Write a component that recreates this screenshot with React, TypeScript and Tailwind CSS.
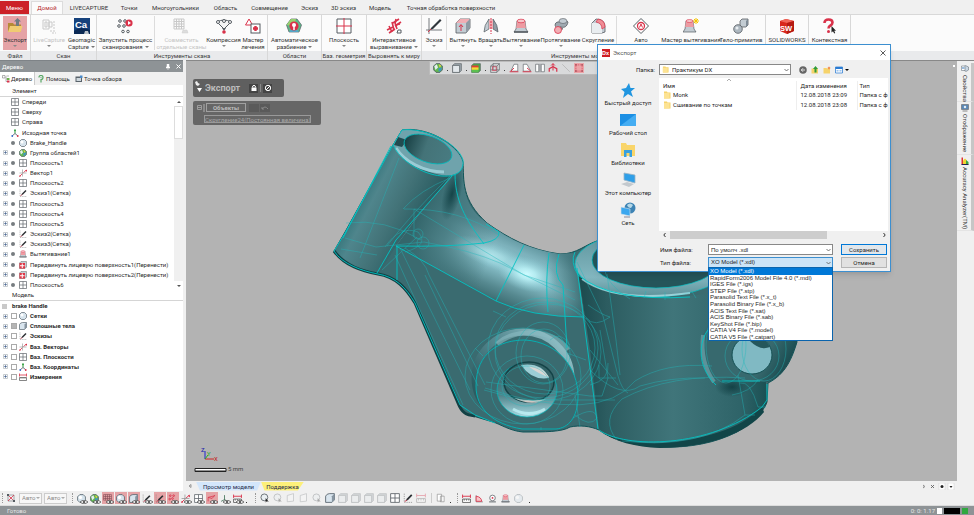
import React from 'react';

const RED = '#d9324a';
const INK = '#555b61';
const STEEL = '#c3ccd3';

// All glyphs are drawn on a 16x16 grid
const glyphs: Record<string, React.ReactNode> = {
  exportFolder: (
    <>
      <path d="M1 14V5h5l1 1.500h7V14z" fill="#b58a35" />
      <path d="M1 14l2-6h12.500l-1.800 6z" fill="#f0cb72" />
      <path d="M9 8V3.500H7L10.500 0 14 3.500h-2V8z" fill="#6f7b84" />
    </>
  ),
  liveCapture: (
    <g fill="none" stroke="#c9c9c9">
      <path d="M2 2h6v9H2zM4 4h2v5H4zM8 4h3v5H8z" />
      <path d="M13 3v9M9 13h6M11 15h4" strokeDasharray="2 1" />
    </g>
  ),
  geomagic: (
    <>
      <rect width="16" height="16" fill="#16427c" />
      <path d="M0 13Q6 8 16 12v4H0z" fill="#0b2a55" />
      <text x="1" y="9.500" fontSize="9.500" fontWeight="bold" fill="#fff" fontFamily="Liberation Sans, sans-serif">Ca</text>
      <path d="M10 16l1-3h3l1 3z" fill="#b9c1c9" />
    </>
  ),
  scanProcess: (
    <>
      <g fill="none" stroke={INK}>
        <circle cx="3" cy="3" r="1.300" />
        <circle cx="8" cy="3" r="1.300" />
        <circle cx="2" cy="8" r="1.300" />
        <circle cx="7" cy="8" r="1.300" />
        <circle cx="6" cy="13.500" r="1.300" />
        <circle cx="11" cy="13.500" r="1.300" />
      </g>
      <circle cx="12" cy="5" r="3.600" fill={RED} />
      <path d="M11 3l3 2-3 2z" fill="#fff" />
    </>
  ),
  alignScans: (
    <>
      <path d="M1 1h10v10H1zM3.500 1v10M6 1v10M8.500 1v10M1 3.500h10M1 6h10M1 8.500h10" fill="none" stroke="#c9c9c9" />
      <path d="M9 15l1-3h4l1 3z" fill="#ddd" stroke="#ccc" strokeWidth=".5" />
    </>
  ),
  compress: (
    <>
      <path d="M1 4q7-4 14 0L8 11z" fill="#f4f4f4" stroke={INK} />
      <circle cx="2" cy="4" r="1.500" fill="#fff" stroke={INK} />
      <circle cx="14" cy="4" r="1.500" fill="#fff" stroke={INK} />
      <circle cx="8" cy="3" r="1.500" fill="#fff" stroke={INK} />
      <path d="M6 10h4L8 13z" fill={INK} />
      <circle cx="8" cy="14" r="1.800" fill={RED} />
    </>
  ),
  heal: (
    <>
      <path d="M4 1l3.500 6h-7z" fill="#fff" stroke={RED} />
      <rect x="6" y="6" width="9" height="9" fill="#fff" stroke={INK} />
      <path d="M10.500 8v5M8 10.500h5" stroke={RED} strokeWidth="2.400" />
    </>
  ),
  autoSplit: (
    <>
      <path d="M5 1h6l4.500 6L13 14H3L.5 7z" fill="#5eb98a" stroke={INK} strokeWidth=".7" />
      <path d="M.5 7L5 1h5L8 8z" fill="#98d36f" />
      <path d="M3 14l5-6 5 6z" fill="#55a7c9" />
      <circle cx="8" cy="8" r="4.600" fill={RED} />
      <circle cx="8" cy="7" r="2" fill="#fff" />
      <path d="M8 8v4" stroke="#fff" strokeWidth="1.500" />
    </>
  ),
  plane: (
    <>
      <path d="M1 1h14v14H1z" fill="#fff" stroke={INK} />
      <path d="M8 0v16M0 8h16" stroke={RED} />
    </>
  ),
  align: (
    <g stroke={RED} fill="none" strokeWidth="1.600">
      <path d="M1 12l6-3M3 15l6-4M7 5l6-4M9 8l6-4" />
      <path d="M10 1l-1 5M14 6l-5 1M3 8l3 6M6 4l2 8M9 5l2 6" />
      <path d="M11 15l1-3h3v3z" stroke={INK} strokeWidth="1" />
    </g>
  ),
  sketch: (
    <>
      <path d="M3 0v16M0 12h16" stroke={INK} strokeWidth=".8" />
      <path d="M5 10L14 1l1.500 1.500L7 11l-3 1z" fill="#30363c" />
      <path d="M2 14l3-3" stroke={RED} />
    </>
  ),
  extrude: (
    <>
      <path d="M1 5l4-4h10v9l-4 5H1z" fill={STEEL} stroke={INK} strokeWidth=".8" />
      <path d="M1 5l4-4h10l-4 4z" fill="#f1aeb4" />
      <path d="M11 5l4-4v9l-4 5z" fill="#8f9aa3" />
      <path d="M6 13V7M4 9l2-2.500L8 9" stroke={RED} fill="none" />
    </>
  ),
  revolve: (
    <>
      <path d="M6 1Q1 7 1 14l5-3z" fill={STEEL} stroke={INK} strokeWidth=".7" />
      <path d="M10 1q5 6 5 13l-5-3z" fill="#929ca5" stroke={INK} strokeWidth=".7" />
      <path d="M6 2h4v9H6z" fill="#f1aeb4" />
      <path d="M8 0v16" stroke={RED} strokeDasharray="2 1" />
    </>
  ),
  loft: (
    <>
      <path d="M4 3h8l1 8 2 3H1l2-3z" fill={STEEL} stroke={INK} strokeWidth=".7" />
      <path d="M4 3h8l.8 7H3.200z" fill="#ee9ba2" />
      <ellipse cx="8" cy="3" rx="4" ry="1.800" fill="#f7c6ca" stroke={RED} strokeWidth=".7" />
      <path d="M1 14h14" stroke={INK} strokeWidth="1.500" />
    </>
  ),
  sweep: (
    <>
      <path d="M5 11C0 8 2 3 7 4c2 .5 3-1 4-3l4 3c-1 5-4 6-7 5-2-1 0 1 2 2z" fill="#9fa9b1" stroke={INK} strokeWidth=".8" />
      <ellipse cx="10" cy="3" rx="4" ry="2.500" fill={STEEL} stroke={INK} strokeWidth=".6" />
      <circle cx="5" cy="12" r="3.500" fill="#f1aeb4" stroke={RED} strokeWidth=".8" />
    </>
  ),
  fillet: (
    <>
      <path d="M2 5l4-4q9 0 9 8v5l-3 1H2z" fill={STEEL} stroke={INK} strokeWidth=".8" />
      <path d="M2 5h4q6 0 6 6v4H2z" fill="#e9edf0" />
      <path d="M6 4l2-3q7 1 7 8l-3 2q0-6-6-7z" fill="#f08d95" stroke={RED} strokeWidth=".7" />
    </>
  ),
  auto: (
    <>
      <path d="M8 .5L15.500 8 8 15.500.5 8z" fill="#fff" stroke={INK} />
      <circle cx="8" cy="8" r="3.500" fill="none" stroke={RED} strokeWidth="1.300" />
      <path d="M6.500 9.500L8 6l1.500 3.500" fill="none" stroke={RED} />
    </>
  ),
  loftWizard: (
    <>
      <path d="M3 3h7l1 8 2 3H0l2-3z" fill={STEEL} stroke={INK} strokeWidth=".7" />
      <path d="M3 3h7l.8 6H2.200z" fill="#ee9ba2" />
      <ellipse cx="6.500" cy="3" rx="3.500" ry="1.500" fill="#f7c6ca" stroke={RED} strokeWidth=".6" />
      <path d="M13 0v6M10 3h6M11 1l4 4M15 1l-4 4" stroke="#f5c400" />
    </>
  ),
  primitive: (
    <>
      <path d="M7 3l2-2h6v6l-2 2H7z" fill={STEEL} stroke={INK} strokeWidth=".8" />
      <path d="M13 3l2-2v6l-2 2z" fill="#7f8b96" />
      <circle cx="5" cy="11" r="4.300" fill="#aeb8c0" stroke={INK} strokeWidth=".8" />
      <circle cx="4" cy="10" r="1.500" fill="#e9eef1" />
    </>
  ),
  solidworks: (
    <>
      <path d="M1 3l6-2 8 2v10l-7 3-7-3z" fill="#d8261c" />
      <path d="M1 3l6-2 8 2-7 2z" fill="#f0665a" />
      <path d="M8 5l7-2v10l-7 3z" fill="#b51911" />
      <text x="1" y="12.500" fontSize="7.500" fontWeight="bold" fill="#fff" fontFamily="Liberation Sans, sans-serif">SW</text>
    </>
  ),
  help: (
    <>
      <path d="M3.500 5q0-3.500 4-3.500t4 3q0 1.500-2 3-2 1-2 3" fill="none" stroke={RED} strokeWidth="2.600" />
      <circle cx="7.500" cy="13.500" r="1.500" fill={RED} />
      <path d="M10.500 8v6.500l1.500-1.300 1.200 2.300 1-.5-1-2.300h1.800z" fill="#222" />
    </>
  ),
  refPlane: <path d="M1 1h14v14H1zM8 1v14M1 8h14" fill="#fff" stroke="#60666c" strokeWidth="1.400" />,
  origin: (
    <>
      <path d="M8 9V2" stroke="#2d9c3c" strokeWidth="2" />
      <path d="M8 9l-6 5M8 9l6 5" stroke="#4b5563" strokeWidth="1.600" />
      <circle cx="8" cy="2.500" r="1.800" fill="#2d9c3c" />
      <circle cx="2.500" cy="14" r="1.800" fill="#3567c9" />
      <circle cx="13.500" cy="14" r="1.800" fill={RED} />
    </>
  ),
  mesh: (
    <>
      <path d="M5 1h6l4 4v6l-4 4H5l-4-4V5z" fill="#d6e3ec" stroke="#4d5a64" strokeWidth="1.300" />
      <circle cx="6" cy="6" r="3" fill="#fff" />
    </>
  ),
  regions: (
    <>
      <path d="M5 1h6l4 4v6l-4 4H5l-4-4V5z" fill="#62b64f" stroke="#4d5a64" strokeWidth="1.300" />
      <path d="M2 5l4-3 2 5-4 4z" fill="#e6eef2" />
      <path d="M9 8l5-1-1 5-4 2z" fill="#3c94c8" />
      <path d="M9 2l4 2-2 4z" fill="#e6cf46" />
    </>
  ),
  vector: (
    <>
      <path d="M1 15L6 10M9 7l6-5" stroke={RED} strokeWidth="1.600" />
      <path d="M7 1v14M1 8h14" stroke="#777" />
      <circle cx="2" cy="14" r="1.500" fill={RED} />
      <path d="M12 2h4v4z" fill={RED} />
    </>
  ),
  sketchSmall: (
    <>
      <path d="M2 1v14h13" stroke="#777" fill="none" strokeDasharray="2 1.500" />
      <path d="M4 13L6 9l7-7 2 2-7 7z" fill="#2b2f33" />
      <path d="M3 14l3-3" stroke={RED} strokeWidth="1.500" />
    </>
  ),
  moveFace: (
    <>
      <path d="M1 4l3-3h11v11l-3 3H1z" fill="#c7ced4" stroke="#666" />
      <path d="M1 4h11v11H1z" fill="#de3545" />
      <path d="M6.500 5v9M2 9.500h9" stroke="#fff" strokeWidth="2" />
    </>
  ),
  body: (
    <>
      <path d="M1 5q2-4 6-4h8v10l-4 4H1z" fill="#d9e5ee" stroke="#4d5a64" strokeWidth="1.300" />
      <path d="M11 5l4-4v10l-4 4z" fill="#8795a1" />
    </>
  ),
  measure: (
    <>
      <path d="M1 1v6M15 1v6M1 4h14" stroke={RED} strokeWidth="1.600" />
      <path d="M1 9h14v6H1z" fill="#fff" stroke="#444" strokeWidth="1.300" />
      <path d="M4 9v3M8 9v3M12 9v3" stroke="#444" />
    </>
  ),
  folder: (
    <>
      <path d="M2 1h6l1 2h6v12H2z" fill="#f6d36b" />
      <path d="M2 4h11v11H2z" fill="#fde393" />
    </>
  ),
  quick: <path d="M9 1l1.500 5H15l-4 3.500 2 5.500-5-3-5 4 1.500-6L1 7l5-1z" fill="#2196e0" />,
  desktop: (
    <>
      <rect y="2" width="16" height="12" fill="#1b8fe4" />
      <path d="M0 14L16 2v12z" fill="#45adf2" />
    </>
  ),
  libraries: (
    <>
      <path d="M1 1h5l1 2h8v11H1z" fill="#f9d56a" />
      <path d="M4 15V8h8v7H9.500v-4h-3v4z" fill="#37a0e0" />
    </>
  ),
  computer: (
    <>
      <path d="M4 1l11 2v8L4 8z" fill="#2f9fe8" stroke="#9db4c4" strokeWidth=".8" />
      <path d="M1 12l6-2 7 2-5 3z" fill="#c3c9ce" />
    </>
  ),
  network: (
    <>
      <circle cx="10" cy="6" r="5.500" fill="#3d83b4" />
      <path d="M7 3q3-3 6 0l-2 3q-3 0-4-3z" fill="#b5d8e8" />
      <path d="M1 5l9 2v7l-9-2z" fill="#3ba7ef" stroke="#d6e3eb" strokeWidth=".6" />
      <path d="M4 15h6" stroke="#889" />
    </>
  ),
  back: (
    <>
      <circle cx="8" cy="8" r="7.500" fill="#666" />
      <path d="M12 8H5M8 4.500L4.500 8 8 11.500" stroke="#fff" fill="none" strokeWidth="1.600" />
    </>
  ),
  up: (
    <>
      <path d="M1 5h13v10H1z" fill="#f6d36b" />
      <path d="M7 13V6H4l5-6 5 6h-3v7z" fill="#2f9c36" />
    </>
  ),
  newFolder: (
    <>
      <path d="M1 4h6l1 1h6v10H1z" fill="#f6d36b" />
      <path d="M12 1v6M9 4h6M10 2l4 4M14 2l-4 4" stroke="#f0732b" />
    </>
  ),
  views: (
    <>
      <path d="M1 2h14v12H1z" fill="#fff" stroke="#2b7cd3" strokeWidth="1.500" />
      <path d="M1 2h14v4H1z" fill="#2b7cd3" />
      <path d="M3 8h4v3H3zM9 8h4v3H9z" fill="#9bc4ee" />
    </>
  ),
  properties: (
    <>
      <path d="M5 4l4-3 6 3v6l-5 3-5-3z" fill="#c9d6e2" stroke="#56616b" />
      <path d="M1 2h7v9H1z" fill="#fff" stroke="#56616b" />
      <path d="M2 5h5M2 7h5" stroke="#3b78b8" />
    </>
  ),
  shaded: (
    <>
      <path d="M1 4l3-3h11v11l-3 3H1z" fill="#9aa3aa" stroke={INK} />
      <path d="M1 4h11v11H1z" fill="#e3e8ec" stroke={INK} />
    </>
  ),
  colorMap: (
    <>
      <path d="M1 4l3-3h11v11l-3 3H1z" fill="#4aa84a" stroke={INK} />
      <path d="M1 4h11v4H1z" fill="#e04033" />
      <path d="M1 7h11v4H1z" fill="#f3dc35" />
      <path d="M1 11h11v4H1z" fill="#5cc050" />
    </>
  ),
  viewCube: (
    <>
      <path d="M1 5l4-4h10v10l-4 4H1zM1 5h10v10M11 5l4-4M5 1v10H1M5 11h10" fill="none" stroke={INK} />
      <path d="M4 6h6v6H4z" fill="none" stroke={RED} />
    </>
  ),
  flipA: (
    <>
      <path d="M3 13L8 2h6v11z" fill="#fff" stroke={INK} />
      <path d="M1 14h14M3 13l5-5" stroke={RED} strokeWidth="1.500" />
    </>
  ),
  flipB: (
    <>
      <path d="M2 13V2h6l6 11z" fill="#fff" stroke={INK} />
      <path d="M1 14h14M13 12L8 8" stroke={RED} strokeWidth="1.500" />
    </>
  ),
  section: <path d="M1 2h5v12H1zM10 2h5v12h-5zM8 1v14" fill="#fff" stroke={INK} />,
  normalTo: (
    <>
      <path d="M2 14V9l6-3 6 3v5" fill="none" stroke={RED} strokeWidth="2" />
      <path d="M8 1v11M5 4l3-3 3 3" fill="none" stroke={RED} strokeWidth="1.600" />
    </>
  ),
  line: <path d="M2 2l12 12" stroke="#aaa" />,
  marquee: (
    <>
      <rect width="16" height="16" fill="#eba5a8" />
      <path d="M3 3h10v10H3z" fill="none" stroke={RED} strokeDasharray="2 1" />
      <path d="M2 2h2v2H2zM12 2h2v2h-2zM2 12h2v2H2zM12 12h2v2h-2z" fill="#8c3640" />
    </>
  ),
  fit: (
    <>
      <path d="M2 2h12v12H2z" fill="none" stroke={INK} />
      <path d="M2 2l12 12M14 2L2 14" stroke={RED} strokeWidth="1.600" />
      <path d="M0 0h4v4H0zM12 12h4v4h-4z" fill={INK} />
    </>
  ),
  grid: <path d="M1 1h14v10H1zM4.500 1v10M8 1v10M11.500 1v10M1 4.500h14M1 8h14" fill="none" stroke="#7d4850" />,
  points: (
    <g fill="none" stroke={RED} strokeWidth="1.500">
      <circle cx="4" cy="3" r="1.500" />
      <circle cx="10" cy="3" r="1.500" />
      <circle cx="3" cy="9" r="1.500" />
      <circle cx="8" cy="8" r="1.500" />
    </g>
  ),
  curve: <path d="M2 13V6l7 2 5-6M2 6l12-3" fill="none" stroke={RED} strokeWidth="1.300" />,
  coord: <path d="M8 2v9M2 13l6-3 6 3" fill="none" stroke="#46745a" strokeWidth="1.500" />,
  select: (
    <>
      <circle cx="7" cy="7" r="5.500" fill="#e9eef1" stroke={INK} strokeWidth="1.300" />
      <path d="M9 8v7l2-2 3 1z" fill="#222" />
    </>
  ),
  selectPatch: <path d="M2 4l10-3v12L2 14z" fill="#fafafa" stroke={INK} />,
  angle: (
    <>
      <path d="M2 2v12h12" fill="none" stroke={INK} />
      <path d="M2 4q9 1 10 9L2 13z" fill="#f7c6ca" stroke={RED} strokeWidth="1.500" />
    </>
  ),
  radius: (
    <>
      <circle cx="8" cy="7" r="5" fill="#fff" stroke={INK} strokeWidth="1.300" />
      <circle cx="8" cy="7" r="1.600" fill={RED} />
      <path d="M2 14h12" stroke={INK} strokeWidth="1.600" />
    </>
  ),
  pages: <path d="M2 2h7v11H2zM7 5h6v9H7z" fill="#fff" stroke="#888" />,
  treeTab: (
    <>
      <path d="M1 1h5v5H1z" fill="#fff" stroke="#666" />
      <path d="M9 2h5M8 3v10h5M8 8h5" stroke="#666" fill="none" />
      <path d="M10 6h5v4h-5z" fill="#6bb04c" />
      <path d="M10 11h5v4h-5z" fill={RED} />
    </>
  ),
  helpTab: (
    <>
      <path d="M4 5q0-4 4-4t4 4-4 4v6" fill="none" stroke="#58a765" strokeWidth="2.400" />
      <circle cx="8" cy="5" r="1.500" fill="#8b9" />
    </>
  ),
  viewTab: (
    <>
      <path d="M1 3h13v11H1z" fill="#5a636b" />
      <path d="M3 6h9v6H3z" fill="#cfd8de" />
      <path d="M10 1h5v5h-5z" fill="#4b8ac8" />
    </>
  ),
  display: (
    <>
      <path d="M1 1h14v10H1z" fill="#5a87b5" stroke="#555" />
      <path d="M3 13h10v2H3z" fill="#888" />
      <circle cx="8" cy="6" r="2.500" fill="#e3edf5" />
    </>
  ),
  accuracy: (
    <>
      <path d="M1 15V1h3v14z" fill="#d33" />
      <path d="M4 15V7l4-4 4 4v8z" fill="#f1d332" />
      <path d="M10 15V6l5 4v5z" fill="#3aa845" />
      <path d="M1 15h14" stroke="#225" strokeWidth="2" />
    </>
  ),
};

function Glyph({ name, className }: { name: string; className: string }) {
  return (
    <svg className={`shrink-0 ${className}`} viewBox="0 0 16 16" aria-hidden="true">
      {glyphs[name]}
    </svg>
  );
}

interface Tool {
  icon: string;
  lines: string[];
  width: string;
  arrow?: boolean;
  active?: boolean;
  disabled?: boolean;
  divider?: boolean;
}

const ribbon: { title: string; tools: Tool[] }[] = [
  { title: 'Файл', tools: [{ icon: 'exportFolder', lines: ['Экспорт'], width: 'w-[30px]', arrow: true, active: true }] },
  {
    title: 'Скан',
    tools: [
      { icon: 'liveCapture', lines: ['LiveCapture'], width: 'w-9', arrow: true, disabled: true },
      { icon: 'geomagic', lines: ['Geomagic', 'Capture'], width: 'w-[29px]', arrow: true },
    ],
  },
  {
    title: 'Инструменты скана',
    tools: [
      { icon: 'scanProcess', lines: ['Запустить процесс', 'сканирования'], width: 'w-[58px]', arrow: true, divider: true },
      { icon: 'alignScans', lines: ['Совместить', 'отдельные сканы'], width: 'w-[53px]', disabled: true },
      { icon: 'compress', lines: ['Компрессия'], width: 'w-[31px]', arrow: true },
      { icon: 'heal', lines: ['Мастер', 'лечения'], width: 'w-7' },
    ],
  },
  { title: 'Области', tools: [{ icon: 'autoSplit', lines: ['Автоматическое', 'разбиение'], width: 'w-[53px]', arrow: true }] },
  { title: 'Баз. геометрия', tools: [{ icon: 'plane', lines: ['Плоскость'], width: 'w-11', arrow: true }] },
  { title: 'Выровнять к миру', tools: [{ icon: 'align', lines: ['Интерактивное', 'выравнивание'], width: 'w-[54px]', arrow: true }] },
  {
    title: 'Инструменты моделирования',
    tools: [
      { icon: 'sketch', lines: ['Эскиз'], width: 'w-[25px]', arrow: true, divider: true },
      { icon: 'extrude', lines: ['Вытянуть'], width: 'w-8', arrow: true },
      { icon: 'revolve', lines: ['Вращать'], width: 'w-[23px]', arrow: true },
      { icon: 'loft', lines: ['Вытягивание'], width: 'w-[39px]', arrow: true },
      { icon: 'sweep', lines: ['Протягивание'], width: 'w-[39px]', arrow: true },
      { icon: 'fillet', lines: ['Скругление'], width: 'w-[37px]', divider: true },
      { icon: 'auto', lines: ['Авто'], width: 'w-12' },
      { icon: 'loftWizard', lines: ['Мастер вытягивания'], width: 'w-[52px]' },
      { icon: 'primitive', lines: ['Тело-примитив'], width: 'w-12' },
    ],
  },
  { title: '', tools: [{ icon: 'solidworks', lines: ['SOLIDWORKS'], width: 'w-[42px]' }] },
  { title: '', tools: [{ icon: 'help', lines: ['Контекстная'], width: 'w-[41px]' }] },
];

const tabs = [
  { label: 'LIVECAPTURE', width: 'w-[50px]' },
  { label: 'Точки', width: 'w-[30px]' },
  { label: 'Многоугольники', width: 'w-[63px]' },
  { label: 'Область', width: 'w-[37px]' },
  { label: 'Совмещение', width: 'w-[51px]' },
  { label: 'Эскиз', width: 'w-[29px]' },
  { label: '3D эскиз', width: 'w-[39px]' },
  { label: 'Модель', width: 'w-[34px]' },
  { label: 'Точная обработка поверхности', width: 'w-[108px]' },
];

function RibbonTool({ tool }: { tool: Tool }) {
  const inline = tool.arrow && tool.lines.length > 1;
  return (
    <div className={`${tool.width} flex shrink-0 justify-center ${tool.divider ? 'border-r border-[#dcdcdc]' : ''}`}>
      <button
        type="button"
        disabled={tool.disabled}
        className={`flex flex-col items-center pt-0.5 whitespace-nowrap leading-[7px] ${
          tool.active ? 'w-6 bg-[#e5a3a6]' : ''
        } ${tool.disabled ? 'text-[#c4c4c4]' : 'text-[#333]'}`}
      >
        <Glyph name={tool.icon} className="mb-0.5 size-4" />
        {tool.lines.map((line, i) => (
          <span key={line} className="flex items-center gap-0.5">
            {line}
            {inline && i === 1 && <span className="border-x-2 border-t-2 border-x-transparent border-t-[#777]" />}
          </span>
        ))}
        {tool.arrow && !inline && (
          <span className="mt-0.5 border-x-2 border-t-2 border-x-transparent border-t-[#888]" />
        )}
      </button>
    </div>
  );
}

function Ribbon() {
  return (
    <header className="bg-[#f0f0f0]">
      <nav className="flex h-[14px] items-stretch pt-px">
        <button type="button" className="mr-0.5 w-[29px] bg-[#cc2127] text-white">Меню</button>
        <button type="button" className="mr-px w-8 border-x border-t border-[#dcdcdc] bg-[#fbfbfb] text-[#b3242b]">Домой</button>
        {tabs.map((tab) => (
          <button key={tab.label} type="button" className={`${tab.width} shrink-0 text-center whitespace-nowrap text-[#333]`}>
            {tab.label}
          </button>
        ))}
      </nav>
      <div className="flex h-[46px] overflow-hidden border-t border-[#d8d8d8] bg-[#fbfbfb]">
        {ribbon.map((group, i) => (
          <section key={i} className="flex shrink-0 flex-col border-r border-[#d8d8d8]">
            <div className="flex h-9 py-px">
              {group.tools.map((tool) => (
                <RibbonTool key={tool.icon} tool={tool} />
              ))}
            </div>
            <h2 className="h-[9px] bg-[#e9eaec] text-center leading-[9px] whitespace-nowrap text-[#3a3a3a]">{group.title}</h2>
          </section>
        ))}
        <div className="flex-1 pt-9">
          <div className="h-[9px] bg-[#e9eaec]" />
        </div>
      </div>
    </header>
  );
}

interface TreeNode {
  icon: string;
  label: string;
  depth: 0 | 1 | 2;
}

const features: TreeNode[] = [
  { icon: 'refPlane', label: 'Спереди', depth: 0 },
  { icon: 'refPlane', label: 'Сверху', depth: 0 },
  { icon: 'refPlane', label: 'Справа', depth: 0 },
  { icon: 'origin', label: 'Исходная точка', depth: 0 },
  { icon: 'mesh', label: 'Brake_Handle', depth: 1 },
  { icon: 'regions', label: 'Группа областей1', depth: 2 },
  { icon: 'refPlane', label: 'Плоскость1', depth: 2 },
  { icon: 'vector', label: 'Вектор1', depth: 2 },
  { icon: 'refPlane', label: 'Плоскость2', depth: 2 },
  { icon: 'sketchSmall', label: 'Эскиз1(Сетка)', depth: 2 },
  { icon: 'refPlane', label: 'Плоскость3', depth: 2 },
  { icon: 'refPlane', label: 'Плоскость4', depth: 2 },
  { icon: 'refPlane', label: 'Плоскость5', depth: 2 },
  { icon: 'sketchSmall', label: 'Эскиз2(Сетка)', depth: 2 },
  { icon: 'sketchSmall', label: 'Эскиз3(Сетка)', depth: 2 },
  { icon: 'loft', label: 'Вытягивание1', depth: 2 },
  { icon: 'moveFace', label: 'Передвинуть лицевую поверхность1(Перенести)', depth: 2 },
  { icon: 'moveFace', label: 'Передвинуть лицевую поверхность2(Перенести)', depth: 2 },
  { icon: 'refPlane', label: 'Плоскость6', depth: 2 },
];

const modelParts = [
  { icon: 'mesh', label: 'Сетки' },
  { icon: 'body', label: 'Сплошные тела' },
  { icon: 'sketchSmall', label: 'Эскизы' },
  { icon: 'vector', label: 'Баз. Векторы' },
  { icon: 'refPlane', label: 'Баз. Плоскости' },
  { icon: 'origin', label: 'Баз. Координаты' },
  { icon: 'measure', label: 'Измерения' },
];

function Expander() {
  return (
    <button type="button" aria-label="Развернуть" className="size-[5px] shrink-0">
      <svg viewBox="0 0 5 5" className="size-[5px]">
        <path d="M.5.5h4v4h-4z" fill="#fff" stroke="#b9bfc4" strokeWidth=".8" />
        <path d="M1.200 2.500h2.600M2.500 1.200v2.600" stroke="#4a6690" strokeWidth=".8" />
      </svg>
    </button>
  );
}

function TreePanel() {
  return (
    <aside className="flex w-[183px] shrink-0 flex-col bg-white text-[#2b2b2b]">
      <div className="flex h-3 items-center gap-1.5 border-t border-[#7e8387] bg-[#8e9396] pr-0.5 pl-0.5 text-white">
        <span className="flex-1">Дерево</span>
        <button type="button" aria-label="Закрепить">
          <svg className="h-1.5 w-1" viewBox="0 0 4 6"><path d="M1 0h2v3h1v1H0V3h1zM2 4v2" fill="#fff" stroke="#fff" strokeWidth=".5" /></svg>
        </button>
        <button type="button" aria-label="Закрыть">
          <svg className="size-[5px]" viewBox="0 0 5 5"><path d="M.5.5l4 4M4.500.5l-4 4" stroke="#fff" /></svg>
        </button>
      </div>
      <div className="flex h-[13px] items-stretch bg-[#f0f0f0]">
        <button type="button" className="flex w-[35px] items-center gap-px border-r border-[#ccc] bg-white pl-0.5">
          <Glyph name="treeTab" className="size-2" />Дерево
        </button>
        <button type="button" className="flex w-9 items-center gap-px pl-0.5">
          <Glyph name="helpTab" className="size-2" />Помощь
        </button>
        <button type="button" className="flex items-center gap-px pl-1 whitespace-nowrap">
          <Glyph name="viewTab" className="size-2" />Точка обзора
        </button>
      </div>
      <h3 className="h-3 border-b border-[#d5d5d5] pl-3 leading-[11px]">Элемент</h3>
      <div className="flex h-[193px] overflow-hidden">
        <ul className="flex flex-1 flex-col">
          {features.map((node) => (
            <li key={node.label} className={`flex flex-1 items-center gap-[3px] ${node.depth === 0 ? 'pl-[11px]' : 'pl-[3px]'}`}>
              {node.depth === 2 && <Expander />}
              {node.depth === 1 && <span className="w-[5px]" />}
              {node.depth > 0 && <span className="mr-px size-1 rounded-full bg-[#777c80]" />}
              <Glyph name={node.icon} className="size-2" />
              <span className="whitespace-nowrap">{node.label}</span>
            </li>
          ))}
        </ul>
        <div className="flex w-[9px] flex-col items-center justify-between bg-[#f0f0f0]">
          <div className="flex w-full flex-col">
            <button type="button" aria-label="Вверх" className="flex h-[9px] items-center justify-center bg-white">
              <span className="border-x-2 border-b-2 border-x-transparent border-b-[#555]" />
            </button>
            <div className="h-[33px] border border-[#ddd] bg-white" />
          </div>
          <button type="button" aria-label="Вниз" className="flex h-[9px] w-full items-center justify-center bg-white">
            <span className="border-x-2 border-t-2 border-x-transparent border-t-[#555]" />
          </button>
        </div>
      </div>
      <h3 className="h-[11px] border-b border-[#d5d5d5] pl-3 leading-[10px]">Модель</h3>
      <ul className="flex h-[81px] flex-col font-bold">
        <li className="flex flex-1 items-center gap-[5px] pl-0.5">
          <span className="size-[5px] bg-[#c9c9c9]" />
          brake Handle
        </li>
        {modelParts.map((part) => (
          <li key={part.label} className="flex flex-1 items-center gap-[3px] pl-[3px]">
            <Expander />
            <label className="flex items-center gap-0.5">
              <input
                type="checkbox"
                defaultChecked={part.icon === 'body'}
                className="size-1.5 appearance-none border border-[#aaa] bg-white checked:bg-[#b5b5b5]"
              />
              <Glyph name={part.icon} className="mr-px size-2" />
              <span className="whitespace-nowrap">{part.label}</span>
            </label>
          </li>
        ))}
      </ul>
    </aside>
  );
}

function BrakeHandle() {
  return (
    <svg className="absolute inset-0 h-full w-full" viewBox="186 61 771 420" role="img" aria-label="Brake_Handle">
      <defs>
        <linearGradient id="tube" gradientUnits="userSpaceOnUse" x1="362" y1="190" x2="425" y2="222">
          <stop offset="0" stopColor="#34757b" />
          <stop offset=".2" stopColor="#4f858c" />
          <stop offset=".55" stopColor="#437378" />
          <stop offset="1" stopColor="#285a5f" />
        </linearGradient>
        <linearGradient id="bore" x1="0" x2="1">
          <stop offset="0" stopColor="#173f43" />
          <stop offset=".45" stopColor="#447378" />
          <stop offset="1" stopColor="#487b81" />
        </linearGradient>
        <linearGradient id="arm" gradientUnits="userSpaceOnUse" x1="527" y1="240" x2="500" y2="304">
          <stop offset="0" stopColor="#5b9099" />
          <stop offset=".2" stopColor="#7db2bc" />
          <stop offset=".5" stopColor="#8cc4ce" />
          <stop offset=".8" stopColor="#568990" />
          <stop offset="1" stopColor="#3a6b70" />
        </linearGradient>
        <linearGradient id="armShade" gradientUnits="userSpaceOnUse" x1="415" y1="225" x2="492" y2="252">
          <stop offset="0" stopColor="#34666b" />
          <stop offset=".4" stopColor="#3f7278" stopOpacity=".8" />
          <stop offset="1" stopColor="#3a6c71" stopOpacity="0" />
        </linearGradient>
        <linearGradient id="armEnd" gradientUnits="userSpaceOnUse" x1="545" y1="0" x2="584" y2="0">
          <stop offset="0" stopColor="#3a6c71" stopOpacity="0" />
          <stop offset="1" stopColor="#326368" stopOpacity=".9" />
        </linearGradient>
        <radialGradient id="shine">
          <stop offset="0" stopColor="#ccfbff" />
          <stop offset=".3" stopColor="#bdf3f8" stopOpacity=".85" />
          <stop offset="1" stopColor="#92d2db" stopOpacity="0" />
        </radialGradient>
        <radialGradient id="shade">
          <stop offset="0" stopColor="#103e42" stopOpacity=".9" />
          <stop offset="1" stopColor="#103e42" stopOpacity="0" />
        </radialGradient>
        <linearGradient id="drum" gradientUnits="userSpaceOnUse" x1="578" y1="0" x2="768" y2="0">
          <stop offset="0" stopColor="#1b494d" />
          <stop offset=".15" stopColor="#2c5c60" />
          <stop offset=".5" stopColor="#40757a" />
          <stop offset=".85" stopColor="#2f6469" />
          <stop offset="1" stopColor="#1a4f52" />
        </linearGradient>
        <linearGradient id="lug" gradientUnits="userSpaceOnUse" x1="768" y1="352" x2="795" y2="366">
          <stop offset="0" stopColor="#37696e" />
          <stop offset="1" stopColor="#134448" />
        </linearGradient>
        <linearGradient id="rim" x1="0" y1="0" x2="0" y2="1">
          <stop offset="0" stopColor="#5b929a" />
          <stop offset=".7" stopColor="#82b6bf" />
          <stop offset="1" stopColor="#5d9199" />
        </linearGradient>
        <linearGradient id="ring" x1="0" y1="0" x2="0" y2="1">
          <stop offset="0" stopColor="#2a5c61" />
          <stop offset=".6" stopColor="#4f838a" />
          <stop offset="1" stopColor="#a9dbe3" />
        </linearGradient>
        <linearGradient id="bossRim" gradientUnits="userSpaceOnUse" x1="478" y1="390" x2="545" y2="330">
          <stop offset="0" stopColor="#2c5c61" />
          <stop offset=".6" stopColor="#5d9098" />
          <stop offset="1" stopColor="#8abac1" />
        </linearGradient>
      </defs>

      {/* silhouette */}
      <path
        d="M402 130C425 126 458 143 463 162C464 180 461 200 487 223C508 238 530 250 560 254C578 254 585 244 600 240L780 240L797 342C792 358 786 374 768 383L767 402C764 412 750 424 737 432C715 443 690 448 660 447C636 446 612 440 599 430C590 426 580 425 570 427C562 432 545 432 523 432C510 431 500 424 493 422L473 416C466 415 462 412 458 403L415 303C405 287 396 277 378 274C362 271 342 264 334 251L345 232L393 145Z"
        fill="#3a6b70"
        stroke="#0f5357"
        strokeWidth="1"
      />

      {/* clamp tube */}
      <path d="M402 130L393 145L345 233L334 251C342 264 362 271 379 274L396 246L420 220L450 176L440 150Z" fill="url(#tube)" />
      <path d="M334 251C345 266 362 271 378 274C396 277 406 288 415 303L458 403C462 413 466 415 475 416" fill="none" stroke="#124044" strokeWidth="3" />

      {/* arm */}
      <path d="M396 246L418 216L452 175L463 167C461 200 474 214 487 223C510 240 530 250 560 254L575 253L577 268L584 317C550 318 515 310 496 301Z" fill="url(#arm)" />
      <path d="M396 246L418 216L452 175L463 167C461 200 474 214 487 223L520 243L496 301Z" fill="url(#armShade)" />
      <path d="M545 253L575 253L577 268L584 317Q565 318 545 314Z" fill="url(#armEnd)" />
      <ellipse cx="452" cy="194" rx="9" ry="27" fill="url(#shade)" transform="rotate(14 452 194)" />
      <ellipse cx="492" cy="255" rx="42" ry="13" fill="url(#shine)" opacity=".6" transform="rotate(22 492 255)" />
      <ellipse cx="527" cy="274" rx="30" ry="17" fill="url(#shine)" transform="rotate(16 527 274)" />

      {/* clamp rim */}
      <path d="M402 130C425 127 460 145 463 163C463 177 445 178 430 172C412 167 399 155 393 145Z" fill="#6fa3ac" />
      <path d="M396 148C404 161 423 172 444 172" fill="none" stroke="#9accd5" strokeWidth="3" />
      <path d="M398 137L407 140L402 147L394 145Z" fill="#214b50" />
      <ellipse cx="428" cy="149" rx="25" ry="13" fill="url(#bore)" stroke="#00b9bb" strokeWidth=".8" transform="rotate(20 428 149)" />

      {/* drum */}
      <path d="M577 264C600 292 640 299 668 297C720 296 740 285 760 272L767 402C764 412 750 424 737 432C715 443 690 448 660 447C636 446 612 440 599 430L590 350Z" fill="url(#drum)" />
      <ellipse cx="652" cy="264" rx="77" ry="33" fill="url(#rim)" stroke="#00bfc1" strokeWidth=".7" />
      <ellipse cx="656" cy="260" rx="64" ry="28" fill="#25555a" stroke="#00bfc1" strokeWidth=".7" />
      <path d="M582 279C605 296 645 299 690 293" fill="none" stroke="#b7e7ee" strokeWidth="2" opacity=".7" />
      <path d="M599 430C612 440 636 444 662 443C700 440 740 430 762 407L764 412C748 433 706 448 660 448C636 447 614 442 599 430Z" fill="#124548" />

      {/* right lug */}
      <path d="M708 325C694 345 702 372 716 385L722 381L768 382C784 376 790 362 797 342L797 325Z" fill="url(#lug)" />
      <path d="M703 335Q700 362 714 382" fill="none" stroke="#5d9299" strokeWidth="4" />
      <ellipse cx="732" cy="387" rx="17" ry="10" fill="url(#shade)" />
      <ellipse cx="752" cy="355" rx="20" ry="19" fill="#80b9c3" stroke="#155054" />
      <path d="M750 341q10 10 20 6l-4-6z" fill="#25575b" />

      {/* front boss */}
      <ellipse cx="523" cy="378" rx="48" ry="46" fill="none" stroke="url(#bossRim)" strokeWidth="7" />
      <path d="M497 344C515 328 552 328 568 350" fill="none" stroke="#8bbac1" strokeWidth="5" opacity=".6" />
      <path d="M476 386C476 352 500 340 525 340C558 342 578 368 578 396C578 418 568 428 556 429L522 429C492 424 476 408 476 386Z" fill="#3a6b70" stroke="#00b6b8" strokeWidth=".9" />
      <ellipse cx="527" cy="390" rx="30" ry="27" fill="url(#ring)" stroke="#00b6b8" strokeWidth=".7" />
      <ellipse cx="529" cy="382" rx="25" ry="20" fill="#356468" stroke="#144347" strokeWidth="1.500" />
      <path d="M521 365Q542 362 549 378Q532 381 521 365Z" fill="#9cced6" />
      <path d="M528 366Q542 366 549 377Q540 375 528 366Z" fill="#d9d6d4" />
      <path d="M514 398Q530 402 546 399Q532 407 514 398Z" fill="#cfc7c3" />
      <path d="M513 409Q529 418 545 409" fill="none" stroke="#c6f7fb" strokeWidth="3" opacity=".7" />

      {/* feature edges */}
      <g fill="none" stroke="#00c4c4" strokeWidth=".9">
        <path d="M402 130C425 127 458 143 463 160C465 180 440 178 425 172C410 166 399 157 393 145Z" />
        <path d="M393 145L345 233L334 251C342 264 362 271 378 274C396 277 406 288 415 303L460 405L475 415L495 423" />
        <path d="M391 146L343 238M396 246L496 301Q530 317 584 317M452 176L396 240L377 273M397 246L397 280" />
        <path d="M455 174C455 205 470 225 484 244M524 245L496 301M549 253Q545 280 548 312M577 268L598 429" />
        <path d="M575 252Q570 262 578 275Q610 302 690 297M559 254Q552 275 563 285L567 348" />
        <path d="M599 430C625 449 710 448 762 407L767 400V384M722 381H760M716 385C695 365 700 340 708 330" />
        <path d="M396 246Q450 247 484 243Q500 240 499 232L486 224" />
      </g>
      <g fill="none" stroke="#22b9bc" strokeWidth=".6" opacity=".7">
        <path d="M399 158L360 258M346 223Q385 218 421 240M403 209Q420 190 450 178M404 209Q460 208 499 235M414 209V236M414 209L524 275L575 292" />
        <path d="M387 246Q410 215 450 176M382 270L417 237M400 248L470 390M395 255L463 405M405 248Q425 260 429 275L485 385M425 275L478 386" />
        <path d="M345 238L376 247L424 242Q470 250 500 263L575 300M341 249L377 255M385 247Q400 225 418 232Q430 245 405 252" />
        <circle cx="418" cy="234" r="5" />
        <circle cx="423" cy="243" r="6" />
        <ellipse cx="543" cy="348" rx="55" ry="50" />
        <ellipse cx="545" cy="348" rx="50" ry="46" />
        <ellipse cx="548" cy="352" rx="53" ry="48" />
        <ellipse cx="543" cy="353" rx="27" ry="31" />
        <ellipse cx="544" cy="356" rx="23" ry="27" />
        <ellipse cx="523" cy="376" rx="58" ry="48" />
        <ellipse cx="527" cy="390" rx="36" ry="34" />
        <ellipse cx="526" cy="386" rx="24" ry="20" />
        <path d="M493 311L506 317M475 348L483 356M484 390L522 400H615M486 382L590 396H602L608 378L600 330" />
        <path d="M485 388Q600 425 635 381Q665 362 712 366M590 370Q620 400 640 386Q670 377 705 378" />
        <path d="M617 440Q600 420 622 399Q670 373 745 378M622 441Q700 450 745 415M577 262L603 316L618 376Q622 390 628 393" />
        <path d="M607 274L616 340L620 375M588 305Q602 315 610 317Q595 328 586 318M590 350L618 385M599 365V378H616M590 385Q610 380 608 363" />
        <path d="M567 353L586 360M575 395L580 427M573 418Q595 405 597 418Q590 428 575 415M738 375L745 415H755M740 383Q750 380 758 407H766M732 395Q750 392 758 380" />
        <ellipse cx="752" cy="356" rx="27" ry="25" />
        <ellipse cx="764" cy="349" rx="22" ry="32" />
        <ellipse cx="726" cy="345" rx="20" ry="38" />
        <path d="M630 299Q600 280 605 260M646 291L644 298M665 292V300M691 290L696 298M541 430V427M550 340Q560 330 570 345" />
      </g>
    </svg>
  );
}

const viewTools = [
  { icon: 'regions', menu: true },
  { icon: 'shaded', menu: true },
  { icon: 'colorMap', menu: true },
  { icon: 'viewCube', menu: true },
  { icon: 'flipA' },
  { icon: 'flipB' },
  { icon: 'section' },
  { icon: 'normalTo' },
  { icon: 'line' },
  { icon: 'marquee' },
];

function Viewport() {
  return (
    <main className="relative min-w-0 flex-1 overflow-hidden border-t border-[#888] bg-[#b3b3b3]">
      <BrakeHandle />
      <div className="absolute top-0 left-[243px] flex h-[14px] w-[420px] items-center gap-[3px] border border-[#bbb] bg-[#d9dadb] pl-[3px]">
        {viewTools.map((tool) => (
          <button key={tool.icon} type="button" aria-label={tool.icon} className="flex items-end gap-1">
            <Glyph name={tool.icon} className="size-2.5" />
            {tool.menu && <span className="mr-px mb-0.5 size-px bg-[#444]" />}
          </button>
        ))}
      </div>

      {/* Command panels */}
      <div className="absolute top-[18px] left-[7px] flex flex-col items-start gap-1 text-[#bdbdbd]">
        <div className="flex h-[18px] w-[91px] items-center rounded-xs bg-[#5f5f5f]">
          <svg className="mr-0.5 h-3.5 w-2.5" viewBox="0 0 10 14">
            <path d="M2 1l2-1 1 2 2 1-2 2-2-1z" fill="#eee" />
            <path d="M4 7h5L6.500 11z" fill="#fff" />
          </svg>
          <span className="w-11 text-[9px] font-bold">Экспорт</span>
          <button type="button" aria-label="Закрепить" className="flex size-[9px] items-center justify-center bg-[#444]">
            <svg className="size-2" viewBox="0 0 8 8">
              <path d="M1.500 3.500h5V7h-5z" fill="#fff" />
              <path d="M2.700 3.500V2q1.300-1.500 2.600 0v1.500" fill="none" stroke="#fff" />
            </svg>
          </button>
          <span className="mx-0.5 h-2 w-px bg-[#888]" />
          <button type="button" aria-label="Отмена команды" className="flex size-[9px] items-center justify-center bg-[#444]">
            <svg className="size-2" viewBox="0 0 8 8"><circle cx="4" cy="4" r="2.700" fill="none" stroke="#fff" /><path d="M2 6l4-4" stroke="#fff" /></svg>
          </button>
        </div>
        <div className="flex w-32 flex-col gap-[3px] rounded-xs bg-[#666] px-1 pt-0.5 pb-0.5">
          <div className="flex items-center gap-px">
            <svg className="size-[5px]" viewBox="0 0 5 5"><path d="M.5.5h4v4h-4zM1 2.500h3" fill="none" stroke="#aaa" strokeWidth=".8" /></svg>
            <span className="h-2 w-0.5 bg-[#8b8b8b]" />
            <button type="button" className="h-[9px] w-10 border border-[#a0a0a0] leading-[7px] font-bold">Объекты</button>
            <span className="ml-0.5 h-2 w-2.5 bg-[#5a5a5a]" />
            <button type="button" aria-label="Сброс" className="h-2 w-2.5 bg-[#5a5a5a]">
              <svg className="h-2 w-2.5" viewBox="0 0 10 8"><path d="M2 5q3-4 6 0M2 3v2h2" fill="none" stroke="#888" /></svg>
            </button>
          </div>
          <input
            aria-label="Объекты"
            readOnly
            defaultValue="Скругление24(Постоянная величина)"
            className="ml-[7px] h-2 w-[107px] border border-[#999] bg-transparent leading-[6px] text-[#a9a9a9]"
          />
        </div>
      </div>

      {/* Axes and scale */}
      <svg className="absolute bottom-1.5 left-2 h-7 w-14" viewBox="0 0 56 28" fontFamily="Roboto, sans-serif" fontSize="6">
        <path d="M11 12V4" stroke="#2222d0" />
        <path d="M11 12h9" stroke="#d02222" />
        <path d="M11 12l3-4" stroke="#22b022" />
        <text x="7" y="5" fill="#2222aa">Z</text>
        <text x="13" y="9" fill="#22aa22">Y</text>
        <text x="20" y="14" fill="#c02222">X</text>
        <path d="M1 21.500h31v3H1z" fill="#fff" stroke="#222" />
        <path d="M1 24h31" stroke="#222" />
        <text x="34" y="24" fill="#444">5 mm</text>
      </svg>
      <span className="absolute top-1 right-0.5 border-t-2 border-r-2 border-white" />
    </main>
  );
}

const sideTabs = [
  { icon: 'properties', label: 'Свойства', height: 'h-[39px]' },
  { icon: 'display', label: 'Отображение', height: 'h-[53px]' },
  { icon: 'accuracy', label: 'Accuracy Analyzer(TM)', height: 'h-[76px]' },
];

function SideTabs() {
  return (
    <aside className="w-[17px] shrink-0 border-t border-[#888] bg-[#f0f0f0] pt-0.5">
      {sideTabs.map((tab) => (
        <button
          key={tab.label}
          type="button"
          className={`${tab.height} flex w-full flex-col items-center gap-0.5 border-r-3 border-b border-r-[#c6c6c6] border-b-[#e4e4e4] pt-0.5 pl-0.5 text-[#333]`}
        >
          <Glyph name={tab.icon} className="size-2" />
          <span className="leading-[8px] whitespace-nowrap [writing-mode:vertical-rl]">{tab.label}</span>
        </button>
      ))}
    </aside>
  );
}

const showTools = [
  { icon: 'mesh' },
  { icon: 'regions' },
  { icon: 'grid', on: true },
  { icon: 'mesh', on: true },
  { icon: 'body', on: true },
  { icon: 'sketchSmall' },
  { icon: 'sketchSmall', on: true },
  { icon: 'points', on: true },
  { icon: 'vector' },
  { icon: 'refPlane' },
  { icon: 'curve', on: true },
  { icon: 'coord' },
  { icon: 'measure' },
];

const pickTools = [
  { icon: 'select' },
  { icon: 'select', off: true },
  { icon: 'selectPatch', off: true },
  { icon: 'selectPatch', off: true },
  { icon: 'select', off: true },
  { icon: 'body' },
  { icon: 'shaded', off: true },
  { icon: 'shaded', off: true },
  { icon: 'shaded', off: true },
  { icon: 'shaded', off: true },
  { icon: 'refPlane' },
  { icon: 'sketchSmall' },
  { icon: 'measure', off: true },
];

const measureTools = ['measure', 'angle', 'radius', 'loft'];

function Grip() {
  return <span className="mx-0.5 h-2.5 border-l border-dotted border-[#999]" />;
}

function AutoSelect({ label }: { label: string }) {
  return (
    <span className="relative flex">
      <select aria-label={label} className="h-[11px] w-[23px] appearance-none border border-[#ccc] bg-[#f7f7f7] pl-0.5 leading-[8px] text-[#8a8a8a]">
        <option>Авто</option>
      </select>
      <span className="pointer-events-none absolute top-1 right-0.5 border-x-2 border-t-2 border-x-transparent border-t-[#aaa]" />
    </span>
  );
}

function BottomBar() {
  return (
    <div className="flex h-[15px] items-center border-b border-[#ddd] bg-[#f0f0f0]">
      <Grip />
      <button type="button" aria-label="Вписать" className="mx-0.5"><Glyph name="fit" className="size-2" /></button>
      <div className="ml-0.5 flex gap-0.5">
        <AutoSelect label="Режим" />
        <AutoSelect label="Фильтр" />
      </div>
      <span className="w-[3px]" />
      <Grip />
      {showTools.map((tool, i) => (
        <button key={i} type="button" aria-label={tool.icon} className="flex w-[13px] justify-center">
          <span className={`relative flex size-3 items-center justify-center ${tool.on ? 'bg-[#e5a3a6]' : ''}`}>
            <Glyph name={tool.icon} className="size-[9px]" />
            <svg className="absolute right-0 bottom-0 h-1 w-2" viewBox="0 0 8 4">
              <path d="M0 2q4-3.500 8 0-4 3.500-8 0z" fill="#eee" stroke="#444" strokeWidth=".7" />
              <circle cx="4" cy="2" r="1" fill="#333" />
            </svg>
          </span>
        </button>
      ))}
      <span className="mt-2 mr-1.5 ml-0.5 size-px bg-[#333]" />
      <Grip />
      {pickTools.map((tool, i) => (
        <button key={i} type="button" aria-label={tool.icon} className={`flex w-[13px] justify-center ${tool.off ? 'opacity-35' : ''}`}>
          <Glyph name={tool.icon} className="size-2.5" />
        </button>
      ))}
      <span className="mx-1 h-2.5 w-px bg-[#ccc]" />
      <button type="button" aria-label="Копия"><Glyph name="pages" className="size-2.5" /></button>
      <span className="mx-1 mt-2 size-px bg-[#333]" />
      <Grip />
      {measureTools.map((icon) => (
        <button key={icon} type="button" aria-label={icon} className="flex w-[13px] justify-center">
          <Glyph name={icon} className="size-[9px]" />
        </button>
      ))}
      <button type="button" aria-label="Сетка" className="flex w-[13px] justify-center opacity-40">
        <Glyph name="mesh" className="size-[9px]" />
      </button>
      <span className="mx-1 mt-2 size-px bg-[#333]" />
    </div>
  );
}

function DocumentTabs() {
  return (
    <div className="flex h-[10px] items-center bg-[#f0f0f0] text-[#1d2b4a]">
      <svg className="mr-1 ml-0.5 h-1.5 w-1" viewBox="0 0 4 6" aria-hidden="true">
        <path d="M3 1.500L1 3l2 1.500z" fill="none" stroke="#777" strokeWidth=".7" />
      </svg>
      <button type="button" className="h-[9px] w-[65px] bg-[#d3e6fb] leading-[9px] [clip-path:polygon(0_0,100%_0,94%_100%,6%_100%)]">Просмотр модели</button>
      <button type="button" className="h-[9px] w-[43px] bg-[#fdf07a] leading-[9px] [clip-path:polygon(0_0,100%_0,86%_100%,8%_100%)]">Поддержка</button>
      <span className="flex-1" />
      <svg className="mr-[19px] h-[7px] w-8" viewBox="0 0 32 7" aria-hidden="true">
        <path d="M0 2l2 1.500L0 5z" fill="none" stroke="#777" strokeWidth=".7" />
        <path d="M8 2l3 3M11 2L8 5" stroke="#555" strokeWidth=".8" />
        <path d="M16 0h6v7h-6zM25 0h6v7h-6z" fill="#fff" stroke="#ccc" strokeWidth=".5" />
        <circle cx="19" cy="3.500" r="1.500" fill="#222" />
        <path d="M26.500 3h3L28 5z" fill="#222" />
      </svg>
    </div>
  );
}

const places = [
  { icon: 'quick', label: 'Быстрый доступ' },
  { icon: 'desktop', label: 'Рабочий стол' },
  { icon: 'libraries', label: 'Библиотеки' },
  { icon: 'computer', label: 'Этот компьютер' },
  { icon: 'network', label: 'Сеть' },
];

const files = [
  { name: 'Monk', date: '12.08.2018 23:09' },
  { name: 'Сшивание по точкам', date: '12.08.2018 23:08' },
];

const formats = [
  'XO Model (*.xdl)',
  'RapidForm2006 Model File 4.0 (*.mdl)',
  'IGES File (*.igs)',
  'STEP File (*.stp)',
  'Parasolid Text File (*.x_t)',
  'Parasolid Binary File (*.x_b)',
  'ACIS Text File (*.sat)',
  'ACIS Binary File (*.sab)',
  'KeyShot File (*.bip)',
  'CATIA V4 File (*.model)',
  'CATIA V5 File (*.catpart)',
];

function Chevron() {
  return (
    <svg className="pointer-events-none absolute top-1 right-0.5 h-1 w-[5px]" viewBox="0 0 5 4" aria-hidden="true">
      <path d="M.5 1l2 2 2-2" fill="none" stroke="#555" strokeWidth=".8" />
    </svg>
  );
}

function ExportDialog() {
  return (
    <div
      role="dialog"
      aria-label="Экспорт"
      className="absolute top-11 left-[597px] flex w-[294px] flex-col border border-[#3c8fd0] bg-[#f0f0f0] pb-[3px] text-[#1f1f1f] shadow-md"
    >
      <div className="flex h-[15px] items-center gap-[3px] bg-white px-1">
        <svg className="size-2" viewBox="0 0 8 8">
          <rect width="8" height="8" fill="#cf1c24" />
          <text x="0" y="6" fontSize="5.500" fontWeight="bold" fill="#fff" fontFamily="Liberation Sans, sans-serif">Dx</text>
        </svg>
        <span className="flex-1 text-[#555]">Экспорт</span>
        <button type="button" aria-label="Закрыть">
          <svg className="size-1.5" viewBox="0 0 6 6"><path d="M.5.5l5 5M5.500.5l-5 5" stroke="#333" strokeWidth=".8" /></svg>
        </button>
      </div>

      <div className="flex h-[18px] items-center pt-px">
        <label htmlFor="folder" className="w-[61px] pr-1 text-right">Папка:</label>
        <span className="relative flex">
          <Glyph name="folder" className="pointer-events-none absolute top-0.5 left-[3px] size-[7px]" />
          <select id="folder" className="h-[11px] w-[132px] appearance-none border border-[#888] bg-white pl-3 leading-[9px]">
            <option>Практикум DX</option>
          </select>
          <Chevron />
        </span>
        <div className="ml-2 flex items-center gap-1">
          <button type="button" aria-label="Назад"><Glyph name="back" className="size-2" /></button>
          <button type="button" aria-label="На уровень выше"><Glyph name="up" className="size-2" /></button>
          <button type="button" aria-label="Новая папка"><Glyph name="newFolder" className="size-2" /></button>
          <button type="button" aria-label="Вид" className="flex items-center gap-0.5">
            <Glyph name="views" className="size-2" />
            <span className="border-x-2 border-t-2 border-x-transparent border-t-black" />
          </button>
        </div>
      </div>

      <div className="flex">
        <nav className="ml-0.5 flex w-14 shrink-0 flex-col pt-1">
          {places.map((place) => (
            <button key={place.icon} type="button" className="flex h-[30px] flex-col items-center gap-px whitespace-nowrap">
              <Glyph name={place.icon} className="size-4" />
              {place.label}
            </button>
          ))}
        </nav>
        <div className="ml-[3px] flex min-w-0 flex-1 flex-col">
          <div className="mr-0.5 h-[153px] overflow-hidden bg-white">
            <div className="flex h-[3px] justify-center pr-[90px]">
              <svg className="h-1 w-1.5" viewBox="0 0 6 4"><path d="M1 3l2-2 2 2" fill="none" stroke="#888" strokeWidth=".7" /></svg>
            </div>
            <table className="w-full table-fixed border-collapse text-left">
              <thead>
                <tr className="h-[9px] whitespace-nowrap">
                  <th className="w-[137px] p-0 pl-1 font-normal">Имя</th>
                  <th className="w-[61px] border-l border-[#eee] p-0 pl-1 font-normal">Дата изменения</th>
                  <th className="border-l border-[#eee] p-0 pl-0.5 font-normal">Тип</th>
                </tr>
              </thead>
              <tbody>
                {files.map((file) => (
                  <tr key={file.name} className="h-[10px] whitespace-nowrap">
                    <td className="p-0 pl-1">
                      <span className="flex items-center gap-0.5"><Glyph name="folder" className="size-2" />{file.name}</span>
                    </td>
                    <td className="border-l border-[#eee] p-0 pl-1">{file.date}</td>
                    <td className="overflow-hidden border-l border-[#eee] p-0 pl-0.5">Папка с ф</td>
                  </tr>
                ))}
              </tbody>
            </table>
          </div>
          <div className="flex h-2 items-center gap-1 pr-1 pl-1">
            <svg className="h-1.5 w-[3px]" viewBox="0 0 3 6"><path d="M2.500 1L.8 3l1.700 2" fill="none" stroke="#333" /></svg>
            <div className="flex-1"><div className="h-2 w-3/4 bg-[#cdcdcd]" /></div>
            <svg className="h-1.5 w-[3px]" viewBox="0 0 3 6"><path d="M.5 1l1.700 2L.5 5" fill="none" stroke="#333" /></svg>
          </div>
        </div>
      </div>

      <form className="mt-[5px] flex flex-col gap-0.5 pr-[3px] pl-[62px]" onSubmit={(e) => e.preventDefault()}>
        <div className="flex h-[11px] items-center">
          <label htmlFor="filename" className="w-12">Имя файла:</label>
          <span className="relative mr-2 flex flex-1 font-['Liberation_Sans',sans-serif]">
            <input id="filename" defaultValue="По умолч .xdl" className="h-[11px] w-full border border-[#888] bg-white pl-0.5" />
            <Chevron />
          </span>
          <button type="submit" className="h-[11px] w-[46px] border border-[#0078d7] bg-[#e1e7ec] leading-[9px]">Сохранить</button>
        </div>
        <div className="flex h-[11px] items-center">
          <label htmlFor="filetype" className="w-12">Тип файла:</label>
          <span className="relative mr-2 flex flex-1 font-['Liberation_Sans',sans-serif]">
            <select id="filetype" className="h-[11px] w-full appearance-none border border-[#3c8fd0] bg-[#cce4f7] pl-0.5 leading-[9px]">
              <option>XO Model (*.xdl)</option>
            </select>
            <Chevron />
            <ul role="listbox" className="absolute top-[10px] left-0 flex h-[74px] w-full flex-col border border-[#0a64ad] bg-white whitespace-nowrap">
              {formats.map((format, i) => (
                <li key={format} role="option" aria-selected={i === 0} className={`flex flex-1 items-center pl-px leading-[6px] ${i === 0 ? 'bg-[#0078d7] text-white' : ''}`}>
                  {format}
                </li>
              ))}
            </ul>
          </span>
          <button type="button" className="h-[11px] w-[46px] border border-[#b5b5b5] bg-[#e1e1e1] leading-[9px]">Отмена</button>
        </div>
      </form>
    </div>
  );
}

export default function App() {
  return (
    <div className="relative flex min-h-screen flex-col overflow-hidden bg-[#f0f0f0] font-['Roboto','Open_Sans',sans-serif] text-[6px] leading-[8px]">
      <Ribbon />
      <div className="flex flex-1">
        <TreePanel />
        <div className="flex min-w-0 flex-1 flex-col pl-[3px]">
          <div className="flex flex-1">
            <Viewport />
            <SideTabs />
          </div>
          <DocumentTabs />
        </div>
      </div>
      <BottomBar />
      <footer className="flex h-[9px] items-center bg-[#8e9396] pr-1.5 pl-[7px] text-[#e6e6e6]">
        <span className="flex-1">Готово</span>
        <span>0: 0: 1.17</span>
        <span className="ml-0.5 h-1.5 w-[5px] bg-white" />
        <span className="ml-0.5 h-1.5 w-4 bg-black" />
        <span className="ml-0.5 size-1.5 bg-[#2fa83f]" />
      </footer>
      <ExportDialog />
    </div>
  );
}
